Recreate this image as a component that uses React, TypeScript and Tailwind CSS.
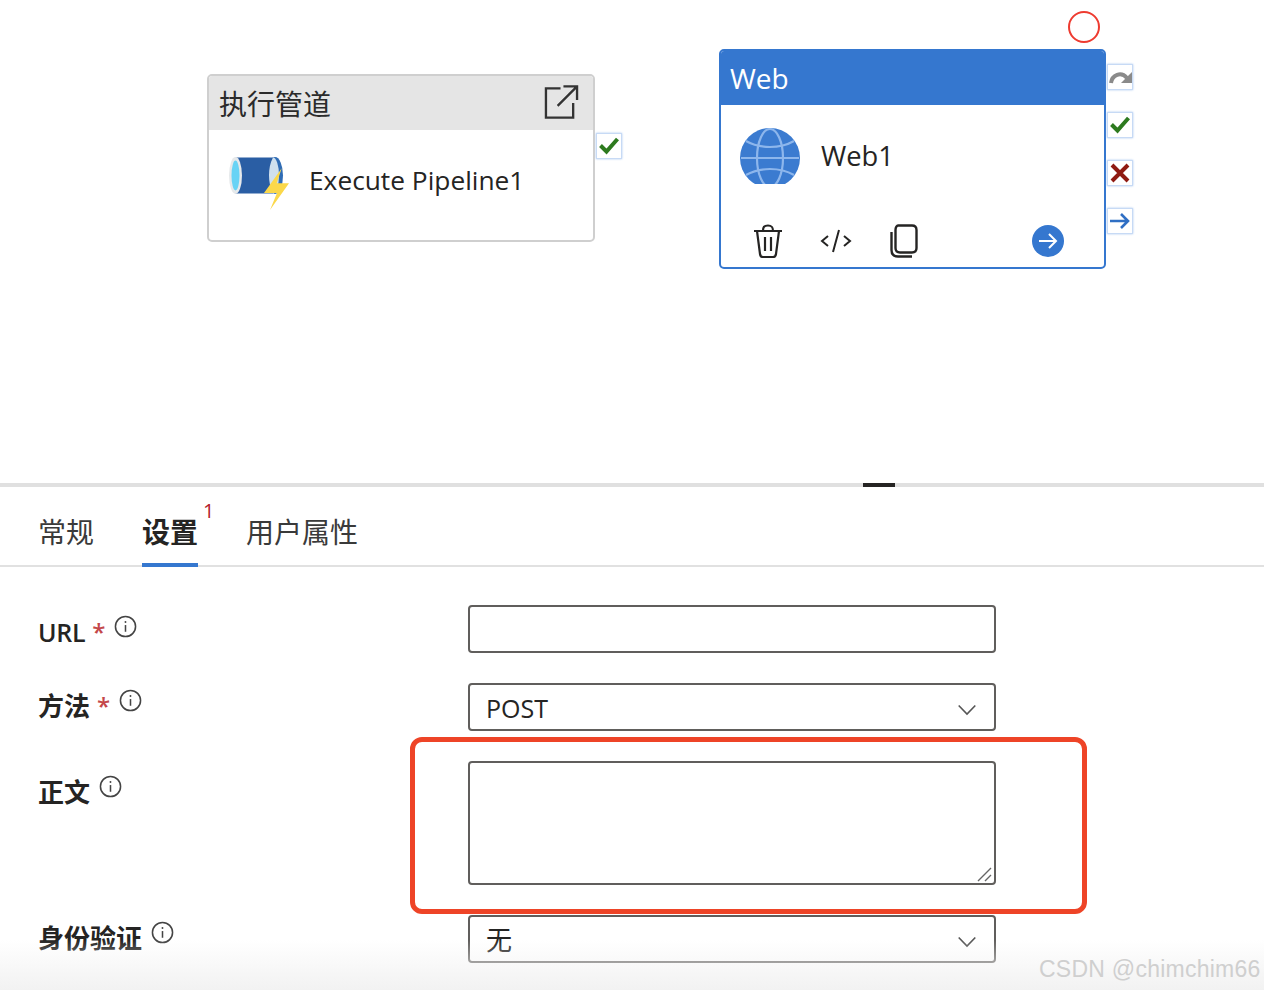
import React from "react";

const font = { fontFamily: '"Open Sans","Noto Sans CJK SC",sans-serif' };

function Port({ children }: { children: React.ReactNode }) {
  return (
    <div className="w-[26px] h-[26px] bg-white border border-[#c7daf5] shadow-[0_0_2px_#a9c6f0] flex items-center justify-center">
      {children}
    </div>
  );
}

const Check = () => (
  <svg width="22" height="20" viewBox="0 0 22 20"><path d="M2.5 9.5 L8.5 15.5 L19.5 3" fill="none" stroke="#2d7a1f" strokeWidth="4" /></svg>
);

function Info() {
  return (
    <svg width="23" height="23" viewBox="0 0 24 24" className="shrink-0 ml-[9px]">
      <circle cx="12" cy="12" r="10.5" fill="none" stroke="#444" strokeWidth="1.6" />
      <path d="M12 10.5V17.5" stroke="#444" strokeWidth="1.6" />
      <circle cx="12" cy="7.3" r="1" fill="#444" />
    </svg>
  );
}

function Chevron() {
  return (
    <svg width="18" height="12" viewBox="0 0 18 12" className="mt-[6px]">
      <path d="M0.7 1.5 L9 10 L17.3 1.5" fill="none" stroke="#555" strokeWidth="1.6" />
    </svg>
  );
}

function Row({ label, labelClass, req, h, top, children }: { label: string; labelClass: string; req?: boolean; h: string; top: string; children: React.ReactNode }) {
  return (
    <div className="flex">
      <div className={"w-[468px] pl-[38px] flex items-start shrink-0 " + top}>
        <span className={"leading-[34px] font-semibold text-[#252423] " + labelClass}>{label}</span>
        {req && <span className="text-[24px] leading-[34px] font-semibold text-[#c4474a] ml-[7px]">*</span>}
        <Info />
      </div>
      <div className={"relative w-[528px] border-2 border-[#605e5c] rounded-[4px] bg-white flex items-center justify-between pl-[16px] pr-[18px] " + h}>{children}</div>
    </div>
  );
}

export default function App() {
  return (
    <div className="relative w-[1264px] h-[990px] overflow-hidden bg-white text-[#252423]" style={font}>
      {/* Canvas */}
      <div className="relative h-[483px]">
        {/* Execute pipeline node */}
        <div className="absolute left-[207px] top-[74px] w-[388px] h-[168px] bg-white border-2 border-[#cfcfcf] rounded-[5px] overflow-hidden">
          <div className="h-[54px] bg-[#e5e5e5] flex items-center justify-between pl-[10px] pr-[14px]">
            <span className="text-[28px] leading-none text-[#2b2b2b] pt-[2px]">执行管道</span>
            <svg width="35" height="36" viewBox="0 0 36 36" className="mb-[3px]">
              <path d="M17 4H2V34H30V19M14 22L34 2M20 2H34V16" fill="none" stroke="#333" strokeWidth="2.4" />
            </svg>
          </div>
          <div className="flex items-start pl-[20px] pt-[26px]">
            <svg width="62" height="56" viewBox="0 0 62 56" className="shrink-0">
              <ellipse cx="46" cy="19.5" rx="8" ry="18.5" fill="#2f6cb5" />
              <ellipse cx="44" cy="19.5" rx="6" ry="18" fill="#cfe0ee" />
              <path d="M44 1.5H6V37.5H44C41 31 40 25 40 19.5C40 13 41 7 44 1.5Z" fill="#2a5ea4" />
              <ellipse cx="6.5" cy="19.5" rx="6.5" ry="18.5" fill="#e6e9eb" />
              <ellipse cx="6.5" cy="19.5" rx="4" ry="15" fill="#68d3f5" />
              <path d="M52.7 12.3L35 37H48L41 54L60 27.3H47.7Z" fill="#fbd84a" />
            </svg>
            <span className="ml-[18px] mt-[5px] text-[26.3px] leading-[38px] text-[#252423]">Execute Pipeline1</span>
          </div>
        </div>
        <div className="absolute left-[596px] top-[133px]">
          <Port><Check /></Port>
        </div>

        {/* Red circle */}
        <div className="absolute left-[1068px] top-[11px] w-[32px] h-[32px] rounded-full border-2 border-[#ee3b30]" />

        {/* Web node */}
        <div className="absolute left-[719px] top-[49px] w-[387px] h-[220px] bg-white border-2 border-[#3577cf] rounded-[5px] overflow-hidden">
          <div className="h-[54px] bg-[#3577cf] flex items-center pl-[9px]">
            <span className="text-[28px] leading-none text-white">Web</span>
          </div>
          <div className="flex items-start pl-[19px] pt-[23px] h-[106px]">
            <svg width="60" height="58" viewBox="0 0 60 58" className="shrink-0">
              <defs>
                <clipPath id="gl"><rect x="0" y="0" width="60" height="56" /></clipPath>
              </defs>
              <g clipPath="url(#gl)">
                <circle cx="30" cy="30" r="30" fill="#3b7bd0" />
                <g fill="none" stroke="#8db6ec" strokeWidth="2.2">
                  <ellipse cx="30" cy="30" rx="13" ry="29" />
                  <path d="M1 30H59M6 13C20 21 40 21 54 13M6 47C20 39 40 39 54 47" />
                </g>
              </g>
            </svg>
            <span className="ml-[21px] mt-[9px] text-[27.3px] leading-[38px] text-[#252423]">Web1</span>
          </div>
          <div className="flex items-center pl-[32px] h-[60px]">
            <svg width="30" height="34" viewBox="0 0 30 34" className="shrink-0">
              <path d="M1 7H29M10 7C10 3 11 1.5 15 1.5S20 3 20 7M4 7L7 30C7.3 32 8.5 33 10 33H20C21.5 33 22.7 32 23 30L26 7M12 13V27M18 13V27" fill="none" stroke="#252423" strokeWidth="2.2" />
            </svg>
            <svg width="32" height="26" viewBox="0 0 32 26" className="ml-[37px] shrink-0">
              <path d="M8 8L2 13L8 18M24 8L30 13L24 18M19 2L13 24" fill="none" stroke="#252423" strokeWidth="2" />
            </svg>
            <svg width="28" height="34" viewBox="0 0 28 34" className="ml-[38px] shrink-0">
              <path d="M8 1.5H22C25 1.5 26.5 3 26.5 6V24C26.5 27 25 28.5 22 28.5H10C7 28.5 5.5 27 5.5 24V6C5.5 3 7 1.5 8 1.5Z" fill="none" stroke="#252423" strokeWidth="2.4" />
              <path d="M1.5 8V26C1.5 30 4 32.5 8 32.5H22" fill="none" stroke="#252423" strokeWidth="2.4" />
            </svg>
            <div className="ml-auto mr-[40px] w-[32px] h-[32px] rounded-full bg-[#3577cf] flex items-center justify-center">
              <svg width="20" height="18" viewBox="0 0 20 18"><path d="M1 9H18M11 2L18 9L11 16" fill="none" stroke="#fff" strokeWidth="2" /></svg>
            </div>
          </div>
        </div>
        <div className="absolute left-[1107px] top-[64px] flex flex-col gap-[22px]">
          <Port>
            <svg width="24" height="18" viewBox="0 0 24 18"><path d="M3 15C4 7 13 3 19 10" fill="none" stroke="#8a8a8a" strokeWidth="4" /><path d="M24 4V15H13Z" fill="#8a8a8a" /></svg>
          </Port>
          <Port><Check /></Port>
          <Port>
            <svg width="20" height="20" viewBox="0 0 20 20"><path d="M2 2L18 18M18 2L2 18" stroke="#8f1a12" strokeWidth="4" /></svg>
          </Port>
          <Port>
            <svg width="22" height="18" viewBox="0 0 22 18"><path d="M1 9H19M12 2L19 9L12 16" fill="none" stroke="#2f6fc4" strokeWidth="2.6" /></svg>
          </Port>
        </div>
      </div>

      {/* Divider */}
      <div className="relative h-[4px] bg-[#e0e0e0]">
        <div className="absolute left-[863px] top-0 w-[32px] h-[4px] bg-[#252423]" />
      </div>

      {/* Tabs */}
      <div className="h-[80px] border-b-2 border-[#e1e1e1] flex pl-[38px] gap-[48px]">
        <div className="h-[80px] pt-[26px] text-[28px] leading-[38px] text-[#3a3a3a]">常规</div>
        <div className="relative h-[80px] pt-[26px] text-[28px] leading-[38px] font-semibold text-[#252423] border-b-4 border-[#3577cf]">
          设置
          <span className="absolute left-[61px] top-[12px] text-[20px] leading-[24px] font-medium text-[#b3202a]">1</span>
        </div>
        <div className="h-[80px] pt-[26px] text-[28px] leading-[38px] text-[#3a3a3a]">用户属性</div>
      </div>

      {/* Form */}
      <div className="pt-[38px] flex flex-col gap-[30px]">
        <Row label="URL" labelClass="text-[25px] tracking-[-0.3px]" req h="h-[48px]" top="pt-[10px]"><span /></Row>
        <Row label="方法" labelClass="text-[26px]" req h="h-[48px]" top="pt-[6px]">
          <span className="text-[25px] leading-[34px] text-[#252423] pt-[1px]">POST</span>
          <Chevron />
        </Row>
        <Row label="正文" labelClass="text-[26px]" h="h-[124px]" top="pt-[14px]">
          <svg width="16" height="16" viewBox="0 0 16 16" className="absolute right-[1px] bottom-[1px]">
            <path d="M1 15L14 2M8 15L14 9" stroke="#666" strokeWidth="1.4" fill="none" />
          </svg>
        </Row>
        <Row label="身份验证" labelClass="text-[26px]" h="h-[48px]" top="pt-[6px]">
          <span className="text-[26px] leading-[34px] text-[#252423] pt-[1px]">无</span>
          <Chevron />
        </Row>
      </div>

      {/* Bottom fade */}
      <div className="absolute left-0 right-0 bottom-0 h-[50px] bg-gradient-to-b from-[#ffffff00] to-[#f2f2f2] pointer-events-none" />

      {/* Annotation */}
      <div className="absolute left-[410px] top-[737px] w-[677px] h-[177px] border-[5px] border-[#ee4427] rounded-[12px] pointer-events-none" />

      {/* Watermark */}
      <div className="absolute left-[1039px] top-[954px] text-[23px] leading-[30px] text-[#cfcfcf] whitespace-nowrap tracking-[0.25px]" style={{ fontFamily: '"Liberation Sans",sans-serif' }}>
        CSDN @chimchim66
      </div>
    </div>
  );
}
